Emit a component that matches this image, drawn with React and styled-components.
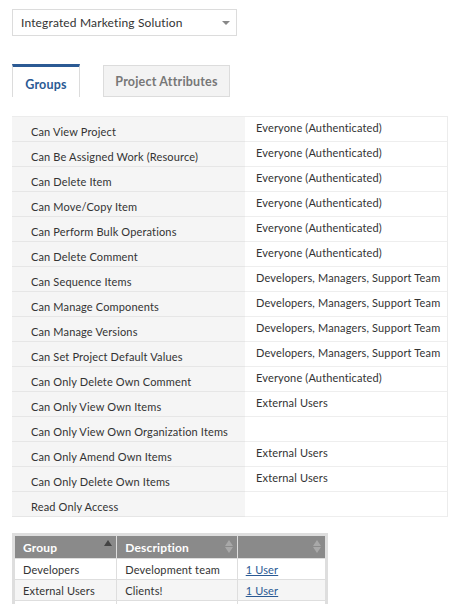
import React from "react";
import styled, { createGlobalStyle } from "styled-components";

const Global = createGlobalStyle`
  html, body { margin: 0; padding: 0; background: #fff; }
  body { font-family: Lato, "Open Sans", sans-serif; font-size: 12px; color: #333; }
`;

const Page = styled.div`
  padding: 9px 12px 0 12px;
  width: 470px;
  box-sizing: border-box;
  display: flex;
  flex-direction: column;
  align-items: flex-start;
`;

const Select = styled.div`
  width: 225px;
  height: 27px;
  box-sizing: border-box;
  border: 1px solid #dcdcdc;
  display: flex;
  align-items: center;
  justify-content: space-between;
  padding: 0 5px 0 8px;
  font-size: 12px;
  letter-spacing: 0.15px;
  color: #333;
`;

const Caret = styled.span`
  width: 0;
  height: 0;
  border-left: 4px solid transparent;
  border-right: 4px solid transparent;
  border-top: 4px solid #888;
  margin-right: 1px;
`;

const Tabs = styled.div`
  display: flex;
  align-items: flex-end;
  gap: 23px;
  margin-top: 28px;
  height: 33px;
`;

const Tab = styled.div`
  box-sizing: border-box;
  height: ${p => (p.$active ? "33px" : "32px")};
  width: ${p => p.$w}px;
  display: flex;
  align-items: center;
  justify-content: center;
  font-weight: 700;
  font-size: 12.5px;
  letter-spacing: 0.2px;
  color: ${p => (p.$active ? "#2b5a94" : "#777")};
  background: ${p => (p.$active ? "#fff" : "#f3f3f3")};
  border: 1px solid #dcdcdc;
  border-top: ${p => (p.$active ? "3px solid #2b5a94" : "1px solid #dcdcdc")};
  border-bottom: ${p => (p.$active ? "none" : "1px solid #dcdcdc")};
  padding-top: ${p => (p.$active ? "5px" : "0")};
`;

const PermTable = styled.div`
  margin-top: 19px;
  display: grid;
  grid-template-columns: 233px 202px;
  border-top: 1px solid #ececec;
  border-right: 1px solid #ececec;
`;

const PermName = styled.div`
  height: 25px;
  box-sizing: border-box;
  background: #f5f5f5;
  border-bottom: 1px solid #e6e6e6;
  padding: 8px 0 0 19px;
  font-size: 11px;
  letter-spacing: 0.15px;
  color: #333;
  white-space: nowrap;
`;

const PermValue = styled.div`
  height: 25px;
  box-sizing: border-box;
  background: #fff;
  border-bottom: 1px solid #eeeeee;
  padding: 4px 0 0 11px;
  font-size: 11px;
  letter-spacing: 0.15px;
  color: #333;
  white-space: nowrap;
`;

const GroupTable = styled.table`
  margin-top: 16px;
  border-collapse: separate;
  border-spacing: 1px;
  background: #dedede;
  padding: 2px;
  width: 316px;
  font-size: 11px;
  letter-spacing: 0.15px;
`;

const Th = styled.th`
  background: #8a8a8a;
  color: #fff;
  font-weight: 700;
  font-size: 12px;
  text-align: left;
  height: 22px;
  padding: 0 8px;
  position: relative;
  width: ${p => p.$w}px;
`;

const Sort = styled.span`
  position: absolute;
  right: 4px;
  top: 4px;
  display: flex;
  flex-direction: column;
  gap: 1px;
`;

const Tri = styled.span`
  width: 0;
  height: 0;
  border-left: 4px solid transparent;
  border-right: 4px solid transparent;
  ${p => (p.$up ? `border-bottom: 6px solid ${p.$c};` : `border-top: 6px solid ${p.$c};`)}
`;

const Td = styled.td`
  background: ${p => (p.$alt ? "#f5f5f5" : "#fff")};
  height: 20px;
  padding: 0 8px;
  color: #333;
`;

const UserLink = styled.a`
  color: #2b5a94;
  text-decoration: underline;
`;

const perms = [
  ["Can View Project", "Everyone (Authenticated)"],
  ["Can Be Assigned Work (Resource)", "Everyone (Authenticated)"],
  ["Can Delete Item", "Everyone (Authenticated)"],
  ["Can Move/Copy Item", "Everyone (Authenticated)"],
  ["Can Perform Bulk Operations", "Everyone (Authenticated)"],
  ["Can Delete Comment", "Everyone (Authenticated)"],
  ["Can Sequence Items", "Developers, Managers, Support Team"],
  ["Can Manage Components", "Developers, Managers, Support Team"],
  ["Can Manage Versions", "Developers, Managers, Support Team"],
  ["Can Set Project Default Values", "Developers, Managers, Support Team"],
  ["Can Only Delete Own Comment", "Everyone (Authenticated)"],
  ["Can Only View Own Items", "External Users"],
  ["Can Only View Own Organization Items", ""],
  ["Can Only Amend Own Items", "External Users"],
  ["Can Only Delete Own Items", "External Users"],
  ["Read Only Access", ""],
];

const groups = [
  ["Developers", "Development team", "1 User"],
  ["External Users", "Clients!", "1 User"],
  ["", "", ""],
];

export default function App() {
  return (
    <>
      <Global />
      <Page>
        <Select>
          <span>Integrated Marketing Solution</span>
          <Caret />
        </Select>
        <Tabs>
          <Tab $active $w={68}>Groups</Tab>
          <Tab $w={127}>Project Attributes</Tab>
        </Tabs>
        <PermTable>
          {perms.map(([n, v]) => (
            <React.Fragment key={n}>
              <PermName>{n}</PermName>
              <PermValue>{v}</PermValue>
            </React.Fragment>
          ))}
        </PermTable>
        <GroupTable>
          <thead>
            <tr>
              <Th $w={85}>
                Group
                <Sort><Tri $up $c="#444" /></Sort>
              </Th>
              <Th $w={103}>
                Description
                <Sort><Tri $up $c="#a8a8a8" /><Tri $c="#a8a8a8" /></Sort>
              </Th>
              <Th $w={71}>
                <Sort><Tri $up $c="#a8a8a8" /><Tri $c="#a8a8a8" /></Sort>
              </Th>
            </tr>
          </thead>
          <tbody>
            {groups.map(([g, d, u], i) => (
              <tr key={i}>
                <Td $alt={i % 2 === 1}>{g}</Td>
                <Td $alt={i % 2 === 1}>{d}</Td>
                <Td $alt={i % 2 === 1}>{u && <UserLink href="#">{u}</UserLink>}</Td>
              </tr>
            ))}
          </tbody>
        </GroupTable>
      </Page>
    </>
  );
}
